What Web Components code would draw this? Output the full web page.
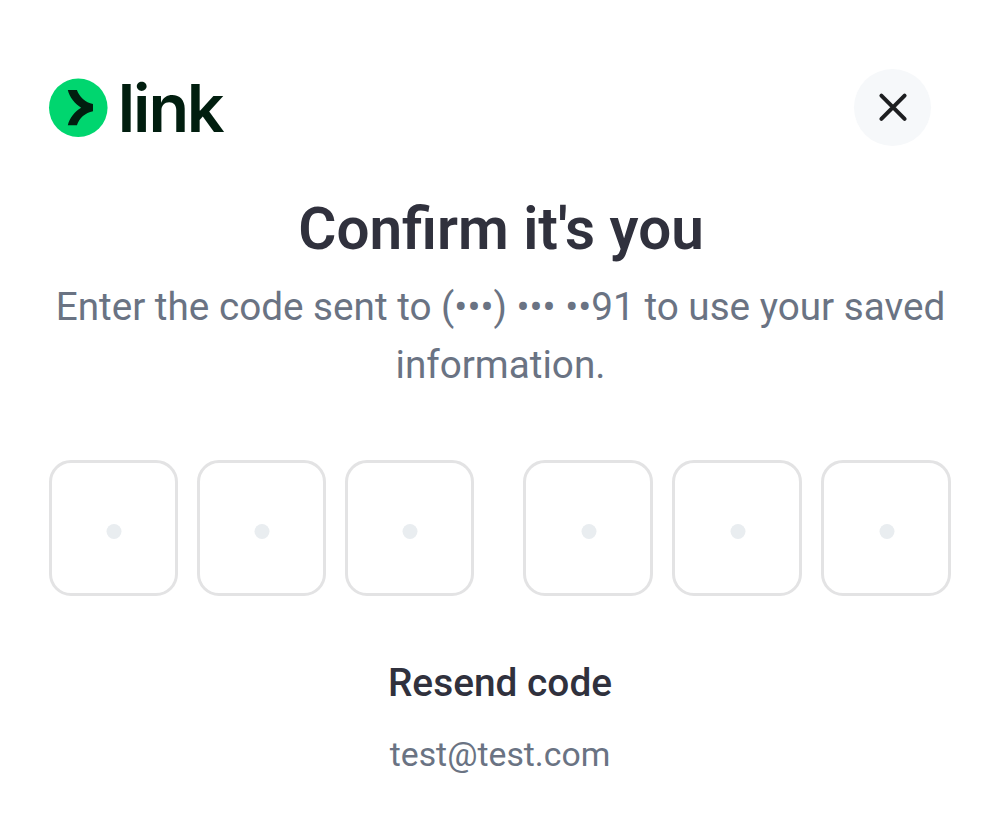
<!DOCTYPE html>
<html lang="en">
<head>
<meta charset="utf-8">
<title>Confirm it's you</title>
<style>
body{margin:0;background:#fff;font-family:Roboto,"Liberation Sans",sans-serif}
</style>
</head>
<body>
<verify-dialog></verify-dialog>
<script>
function define(name, html){
  const t=document.createElement('template');
  t.innerHTML=html;
  customElements.define(name,class extends HTMLElement{
    constructor(){super();this.attachShadow({mode:'open'}).append(t.content.cloneNode(true));}
  });
}
define('link-logo',`
<style>:host{display:block;width:190px;height:60px}svg{display:block;margin-top:-20px;overflow:visible}text{font-family:Inter,sans-serif;font-weight:640;font-size:66.5px;fill:#011e0f}</style>
<svg width="190" height="100" viewBox="0 -20 190 100" role="img" aria-label="link">
  <g transform="translate(0 .4) scale(2.44)">
    <circle cx="12" cy="12" r="12" fill="#00d66f"/>
    <path fill="#011e0f" d="M11.448 4.8h-3.74c.72 3.022 2.835 5.61 5.472 7.2-2.637 1.59-4.752 4.178-5.472 7.2h3.74c.926-2.784 3.466-5.208 6.578-5.7v-3.005c-3.112-.487-5.652-2.91-6.578-5.695Z"/>
  </g>
  <text y="54.3" x="68.8 84 99.4 137.8">link</text>
</svg>`);
define('close-button',`
<style>:host{display:block}button{display:flex;align-items:center;justify-content:center;width:77px;height:77px;padding:0;border:0;border-radius:50%;background:#f6f8fa}</style>
<button aria-label="Close"><svg width="32" height="32" viewBox="0 0 32 32"><path d="M4.4 4.7 27.6 27.9M27.6 4.7 4.4 27.9" stroke="#1d1e20" stroke-width="4" stroke-linecap="round" fill="none"/></svg></button>`);
define('code-digit',`
<style>:host{display:flex;align-items:center;justify-content:center;box-sizing:border-box;width:var(--digit-width,129px);height:136px;padding:7px 0 0 1px;border:3px solid #e3e3e4;border-radius:22px;background:#fff}svg{display:block}</style>
<svg width="16" height="16" viewBox="0 0 16 16"><circle cx="8" cy="7.5" r="7.5" fill="#e9edf0"/></svg>`);
define('code-input',`
<style>:host{display:flex;justify-content:space-between}div{display:flex;gap:19px}.second{--digit-width:130px}</style>
<div><code-digit></code-digit><code-digit></code-digit><code-digit></code-digit></div>
<div class="second"><code-digit></code-digit><code-digit></code-digit><code-digit></code-digit></div>`);
define('verify-dialog',`
<style>
:host{display:block;box-sizing:border-box;width:1000px;height:834px;padding:68.5px 49px 0;background:#fff;text-align:center;color:#6a7383}
header{display:flex;justify-content:space-between;padding-right:20px;height:77px}
link-logo{margin-top:9.5px}
h1{margin:50px 0 0;padding-left:2px;font-size:58.4px;line-height:67px;font-weight:600;color:#30313d}
p{margin:15.5px -20px 0;padding-left:1px;font-size:38.68px;line-height:58px}
code-input{margin-top:66px}
.resend{margin-top:58px;font-size:38.85px;line-height:58px;font-weight:500;color:#30313d}
.email{margin-top:18px;font-size:33.75px;line-height:50px}
</style>
<header><link-logo></link-logo><close-button></close-button></header>
<h1>Confirm it's you</h1>
<p>Enter the code sent to (•••) ••• ••91 to use your saved<br>information.</p>
<code-input></code-input>
<div class="resend">Resend code</div>
<div class="email">test@test.com</div>`);
</script>
</body>
</html>
